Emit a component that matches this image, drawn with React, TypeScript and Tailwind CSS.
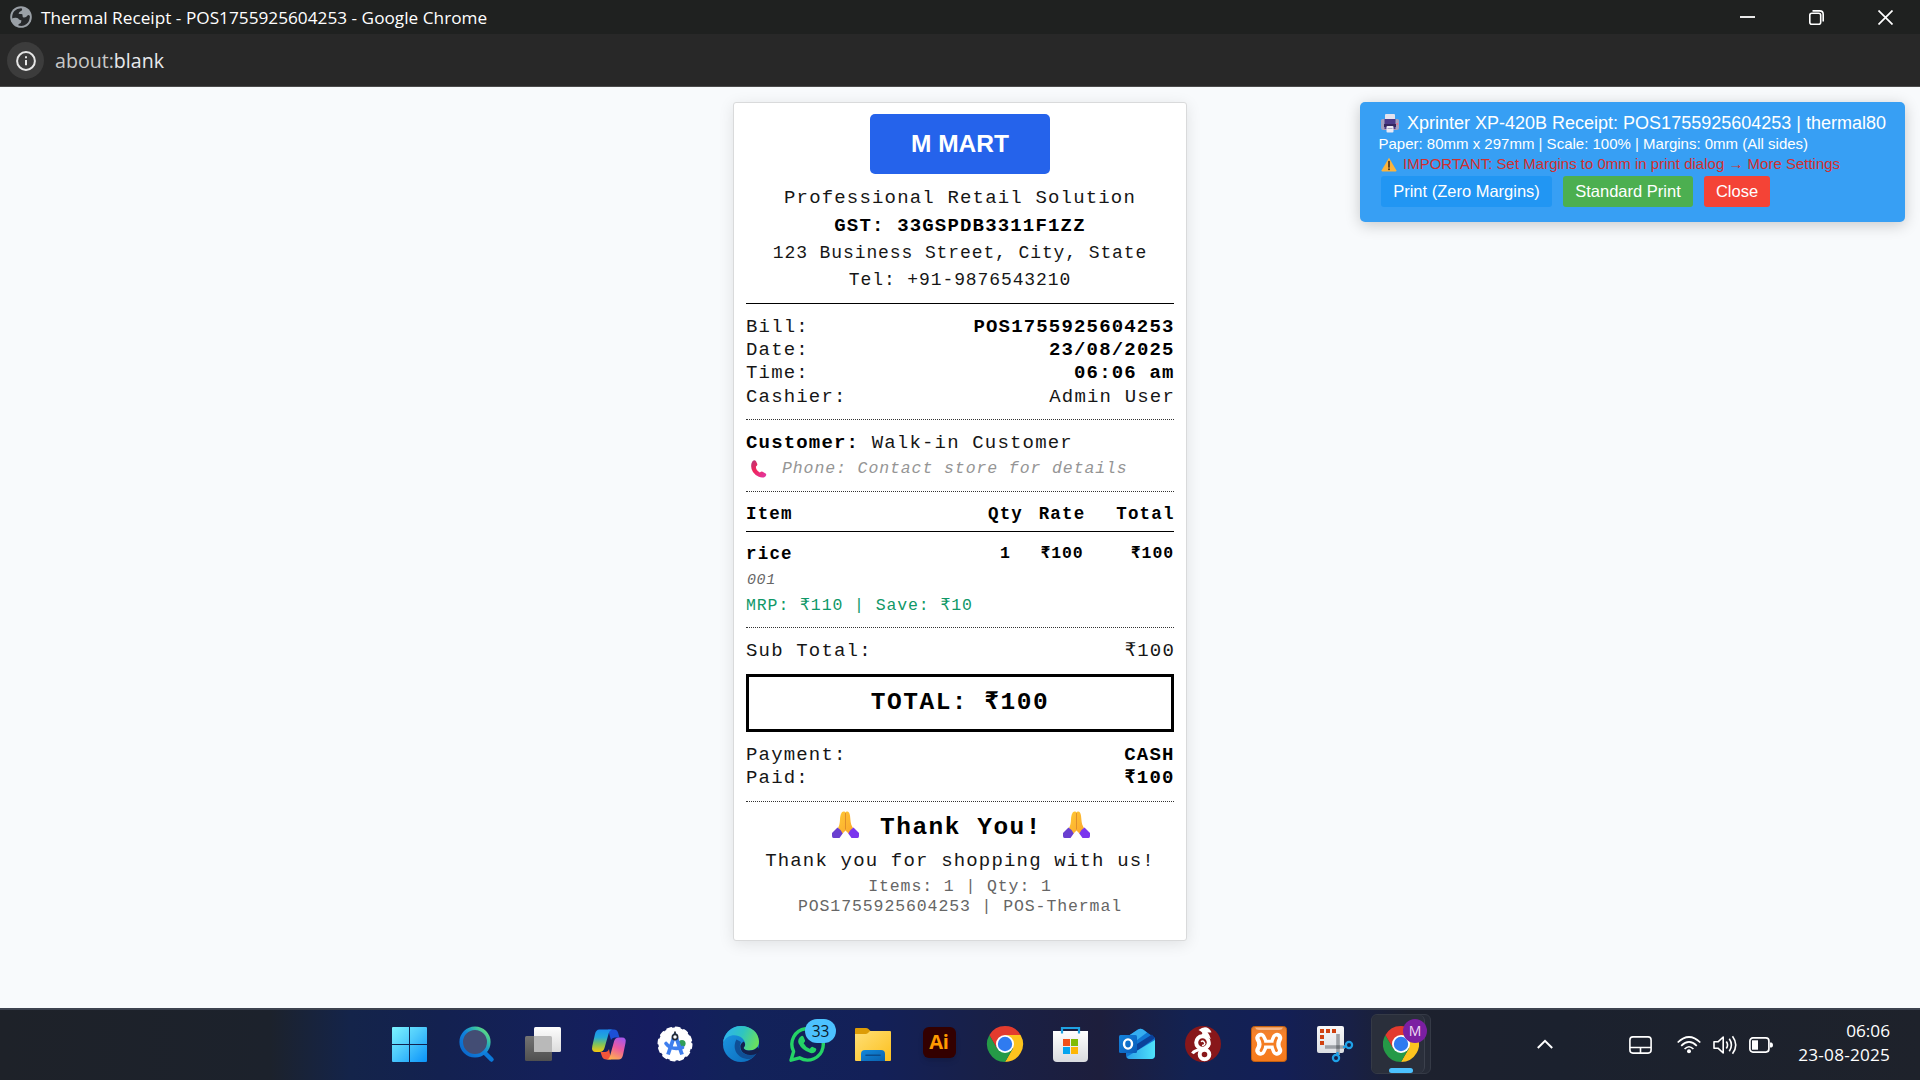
import React from "react";

/* ---------- small illustrations ---------- */

function PrayIcon() {
  return (
    <svg width="27" height="27" viewBox="0 0 27 27" className="block shrink-0">
      <defs>
        <linearGradient id="hand" x1="0" y1="0" x2="1" y2="1">
          <stop offset="0" stopColor="#ffc936" />
          <stop offset="1" stopColor="#fba62c" />
        </linearGradient>
      </defs>
      <path d="M6 17C7.500 14.500 7.800 11.500 8 8.500C8.300 3.500 9.500 .500 11.600 .500c1 0 1.600 .400 1.900 1C13.900 .700 14.500 .400 15.300 .400c2.300 0 2.900 4 3.100 8.100c.300 3.500 .900 6 2.600 8.500L17 23L13.500 19.500L10 23Z" fill="url(#hand)" />
      <path d="M13.500 2v16.500" stroke="#e08f2a" strokeWidth="1" />
      <path d="M0 22L5.500 16.500Q9 18.500 10.700 22.500L7.500 27H1.500Q0 27 0 25Z" fill="#6a3fd0" />
      <path d="M27 22L21.500 16.500Q18 18.500 16.300 22.500L19.500 27H25.500Q27 27 27 25Z" fill="#7a35ee" />
    </svg>
  );
}

function PhoneIcon() {
  return (
    <svg width="16" height="18" viewBox="0 0 16 18" className="block shrink-0">
      <defs>
        <linearGradient id="phone" x1="0" y1="0" x2="1" y2="1">
          <stop offset="0" stopColor="#b03a7c" />
          <stop offset=".4" stopColor="#f0245a" />
          <stop offset="1" stopColor="#e03aa8" />
        </linearGradient>
      </defs>
      <path d="M1.500 1.200Q3.500-.800 5 1.200L6.200 3.800Q6.800 5.200 5 6.400Q4.400 9.500 8.800 12.600Q10.500 11.200 11.600 11.800L14.600 13.600Q16 14.800 14.400 16.400Q11.800 18.600 7.800 16.800Q-1.500 11.800 .500 3.200Z" fill="url(#phone)" />
    </svg>
  );
}

function PrinterIcon() {
  return (
    <svg width="18" height="19" viewBox="0 0 18 19" className="block shrink-0">
      <rect x="4" y="0" width="10" height="7" rx="1" fill="#e4e2ee" />
      <path d="M1.500 5h15a1.500 1.500 0 0 1 1.500 1.500V14a2 2 0 0 1-2 2H2a2 2 0 0 1-2-2V6.500A1.500 1.500 0 0 1 1.500 5Z" fill="#a59fbd" />
      <path d="M3.500 5h11v10h-11z" fill="#4b3a8a" />
      <path d="M3 10h12v3H3z" fill="#34265f" />
      <rect x="5.500" y="12" width="7" height="6.500" rx="1" fill="#eceaf4" />
      <path d="M6.500 14.500h5" stroke="#aaa5bd" />
      <circle cx="16.200" cy="10" r=".9" fill="#f26b8a" />
    </svg>
  );
}

function WarningIcon() {
  return (
    <svg width="16" height="15" viewBox="0 0 16 15" className="block shrink-0">
      <path d="M8 .800L15.300 13.200Q15.600 14.500 14.500 14.500H1.500Q.400 14.500 .700 13.200Z" fill="#fcb43c" />
      <path d="M8 4.500v5.500" stroke="#4a3320" strokeWidth="1.700" strokeLinecap="round" />
      <circle cx="8" cy="12.300" r="1" fill="#4a3320" />
    </svg>
  );
}

function ChromeLogo() {
  return (
    <>
      <path d="M18 9H33.590A18 18 0 0 1 18 36L25.800 22.500Z" fill="#fcc31e" />
      <path d="M25.800 22.500L18 36A18 18 0 0 1 2.410 9L10.200 22.500Z" fill="#259a47" />
      <path d="M10.200 22.500L2.410 9A18 18 0 0 1 33.590 9H18Z" fill="#e33b2e" />
      <circle cx="18" cy="18" r="9" fill="#fff" />
      <circle cx="18" cy="18" r="7.200" fill="#2f7bf0" />
    </>
  );
}

/* ---------- taskbar icons, each on a 36 x 36 grid ---------- */

function WindowsIcon() {
  return (
    <g transform="translate(-2 0)">
      <defs>
        <linearGradient id="win" gradientUnits="userSpaceOnUse" x1="1" y1="1" x2="36" y2="36">
          <stop offset="0" stopColor="#7cf3ff" />
          <stop offset=".45" stopColor="#4fcbfb" />
          <stop offset="1" stopColor="#0a93fa" />
        </linearGradient>
      </defs>
      <path d="M2 1H18V18H1V2a1 1 0 0 1 1-1ZM19 1H35a1 1 0 0 1 1 1V18H19ZM1 19H18V36H2a1 1 0 0 1-1-1ZM19 19H36V35a1 1 0 0 1-1 1H19Z" fill="url(#win)" />
    </g>
  );
}

function SearchIcon() {
  return (
    <g transform="translate(-1 0)">
      <defs>
        <linearGradient id="srch" x1="0" y1="1" x2="1" y2="0">
          <stop offset="0" stopColor="#0a63c8" />
          <stop offset=".5" stopColor="#1183dd" />
          <stop offset=".75" stopColor="#35bfa8" />
          <stop offset="1" stopColor="#7be868" />
        </linearGradient>
      </defs>
      <path d="M26 26L33.500 33.500" stroke="#0b78d8" strokeWidth="4.500" strokeLinecap="round" />
      <circle cx="17" cy="16" r="13.800" fill="#434d74" stroke="url(#srch)" strokeWidth="3.600" />
    </g>
  );
}

function TaskViewIcon() {
  return (
    <g transform="translate(-2 0)">
      <defs>
        <linearGradient id="tvw" x1="0" y1="0" x2="0" y2="1">
          <stop offset="0" stopColor="#fdfdfd" />
          <stop offset="1" stopColor="#dcdcdc" />
        </linearGradient>
        <linearGradient id="tvg" x1="0" y1="0" x2="0" y2="1">
          <stop offset="0" stopColor="#737373" />
          <stop offset="1" stopColor="#505050" />
        </linearGradient>
      </defs>
      <rect x="2" y="10" width="27" height="25" rx="1.500" fill="url(#tvg)" />
      <rect x="11" y="1" width="27" height="25" rx="1.500" fill="url(#tvw)" />
      <path d="M11 10H27.500a1.500 1.500 0 0 1 1.500 1.500V26H12.500A1.500 1.500 0 0 1 11 24.500Z" fill="#b9b9b9" />
    </g>
  );
}

function CopilotIcon() {
  return (
    <g>
      <defs>
        <linearGradient id="cpa" x1="0" y1="0" x2="0" y2="1">
          <stop offset="0" stopColor="#1b8df0" />
          <stop offset=".35" stopColor="#23a9d8" />
          <stop offset=".65" stopColor="#7fc25c" />
          <stop offset="1" stopColor="#f5c80e" />
        </linearGradient>
        <linearGradient id="cpb" x1=".7" y1="0" x2=".3" y2="1">
          <stop offset="0" stopColor="#a957e8" />
          <stop offset=".45" stopColor="#ec5aa0" />
          <stop offset="1" stopColor="#ffb14e" />
        </linearGradient>
      </defs>
      <path d="M17 3.500H23Q26 3.500 27 6.500L28.500 11.500H24Q21 11.500 20 14Z" fill="#1c50d8" />
      <path d="M9.500 26H14Q17 26 18 23L20 33.500H15.500Q12 33.500 11 30.500Z" fill="#f2563a" />
      <path d="M8.500 3.500H22Q18.800 3.500 17.800 7L13.500 22Q12.300 26 8.500 26H5Q0 26 1.300 20L4 8Q5 3.500 8.500 3.500Z" fill="url(#cpa)" />
      <path d="M27.500 33.500H15Q18 33.500 19 30L23 15.500Q24 11.500 28 11.500H31Q35.800 11.500 34.500 17L32 29Q31 33.500 27.500 33.500Z" fill="url(#cpb)" />
    </g>
  );
}

function AndroidStudioIcon() {
  return (
    <g>
      <circle cx="18" cy="18" r="16.500" fill="#fff" />
      <circle cx="18" cy="18" r="16.600" fill="none" stroke="#fff" strokeWidth="1.800" strokeDasharray="4.350 4.350" strokeLinecap="round" />
      <circle cx="25" cy="17.500" r="3.600" fill="#2f9e58" />
      <path d="M18 8L11 28.500" stroke="#3f7fee" strokeWidth="3.800" />
      <path d="M18 8L25 28.500" stroke="#3f7fee" strokeWidth="3.800" />
      <path d="M9 17.500Q14 24.500 25.500 21.500" stroke="#3f7fee" strokeWidth="3.600" fill="none" strokeLinecap="round" />
      <circle cx="18" cy="11" r="2.600" fill="#fff" stroke="#222b38" strokeWidth="1.700" />
      <path d="M18 5.500v2.500" stroke="#222b38" strokeWidth="1.800" />
    </g>
  );
}

function EdgeIcon() {
  return (
    <g>
      <defs>
        <linearGradient id="ed1" x1="0" y1=".3" x2="1" y2=".6">
          <stop offset="0" stopColor="#2fb2ee" />
          <stop offset=".5" stopColor="#2fc5c0" />
          <stop offset="1" stopColor="#6be05a" />
        </linearGradient>
        <linearGradient id="ed2" x1="0" y1="0" x2="1" y2="1">
          <stop offset="0" stopColor="#1d9be6" />
          <stop offset="1" stopColor="#0a67b8" />
        </linearGradient>
      </defs>
      <circle cx="18" cy="18" r="18" fill="url(#ed2)" />
      <path d="M13.500 13.500C8.500 22 14 33.500 27 33Q31 31.500 34 27Q31 29 27 29C19 29 14.500 22.500 18 16Z" fill="#0f4f96" />
      <path d="M0 17C1 7 9 0 18 0C28.500 0 36 7 36 15.500C36 21 32 24.500 26.500 24.500C22.500 24.500 20.300 23 20.800 21.500C23 19 22.500 15 19 12C13 7 3 9 0 17Z" fill="url(#ed1)" />
      <path d="M20.800 21.500C20.300 23 22.500 24.500 26.500 24.500Q31.500 24.500 34.500 21L37 24L34 27.500Q30.500 29.200 27 29C20 28.500 16.500 24 17.500 19Q18.500 16.500 20.700 15.500Q23.500 18.500 20.800 21.500Z" fill="#14204f" />
    </g>
  );
}

function WhatsAppIcon() {
  return (
    <g>
      <path d="M2 34.200L4.600 25.500A15.700 15.700 0 1 1 10.500 31.800Z" fill="none" stroke="#25d366" strokeWidth="3.400" strokeLinejoin="round" />
      <path d="M12 10.200q1.500-.9 2.500 .6l1.600 3.600q.2 1-1.500 2.800q2.200 4 6.200 5.500q1.700-2.200 2.500-2l3.700 1.900q.8 .7-.3 2.700q-1.900 2.400-5.200 1.700q-8.500-2.500-12-9.700q-1.300-4 2.500-7.100Z" fill="#25d366" />
    </g>
  );
}

function FolderIcon() {
  return (
    <g>
      <defs>
        <linearGradient id="fol" x1="0" y1="0" x2="1" y2="1">
          <stop offset="0" stopColor="#ffdf76" />
          <stop offset="1" stopColor="#fcc01e" />
        </linearGradient>
        <linearGradient id="fob" x1="0" y1="0" x2="1" y2="1">
          <stop offset="0" stopColor="#1188dc" />
          <stop offset="1" stopColor="#0a62ae" />
        </linearGradient>
      </defs>
      <path d="M1 2H11Q12.500 2 13.500 3L16 5.500L12 9H0V3Q0 2 1 2Z" fill="#dd9c06" />
      <path d="M0 8H10.500Q12 8 13 7L15 5H35Q36 5 36 6V34Q36 35 35 35H1Q0 35 0 34Z" fill="url(#fol)" />
      <path d="M6 35V28Q6 24 10 24H26Q30 24 30 28V35Z" fill="url(#fob)" />
      <path d="M11 29.300H25" stroke="#0a4c8c" strokeWidth="1.600" strokeLinecap="round" />
    </g>
  );
}

function StoreIcon() {
  return (
    <g>
      <defs>
        <linearGradient id="sto" x1="0" y1="0" x2="0" y2="1">
          <stop offset="0" stopColor="#fff" />
          <stop offset="1" stopColor="#d9dbdf" />
        </linearGradient>
      </defs>
      <path d="M0 5H35V32Q35 36 31 36H4Q0 36 0 32Z" fill="url(#sto)" />
      <path d="M9 7.500V2H26V7.500" fill="none" stroke="#1fa2e2" strokeWidth="2.200" />
      <path d="M10 13H17V20H10Z" fill="#f1511b" />
      <path d="M18 13H25V20H18Z" fill="#80bb03" />
      <path d="M10 21H17V28H10Z" fill="#05a4ef" />
      <path d="M18 21H25V28H18Z" fill="#fdb605" />
    </g>
  );
}

function OutlookIcon() {
  return (
    <g>
      <defs>
        <linearGradient id="out" x1="0" y1="0" x2="1" y2="1">
          <stop offset="0" stopColor="#1483dc" />
          <stop offset="1" stopColor="#0a5bb8" />
        </linearGradient>
        <linearGradient id="oul" x1="0" y1="0" x2="1" y2="0">
          <stop offset="0" stopColor="#2a9fe8" />
          <stop offset="1" stopColor="#4fe3fb" />
        </linearGradient>
      </defs>
      <path d="M7 15V11.500L19 3.500Q21.500 2 24 3.500L36 12V29Q36 33 32 33H11Q7 33 7 29Z" fill="#1177d4" />
      <path d="M7 11.500L19 3.500Q21.500 2 24 3.500L28 6.500L14 17H7Z" fill="#35aef0" />
      <path d="M18 18L33 8.500L36 12L18 25Z" fill="#0b419a" />
      <path d="M36 14V29Q36 33 32 33H11Q8.500 33 7.500 31Z" fill="url(#oul)" />
      <rect x="0" y="9" width="18" height="18" rx="1.500" fill="url(#out)" />
      <ellipse cx="9" cy="18" rx="4" ry="4.600" fill="none" stroke="#fff" strokeWidth="2.400" />
    </g>
  );
}

function WireGuardIcon() {
  return (
    <g>
      <circle cx="18" cy="18" r="18" fill="#88171a" />
      <path d="M13.500 4Q17 1.500 20 1.200Q24 1.200 26.500 6.200Q25 6.800 22.500 6.200Q25 9 25.800 13Q22.500 10 19 10.500Q15.500 11 17 8Q18.500 6.500 13.500 4Z" fill="#fff" />
      <circle cx="17.500" cy="16.500" r="6.300" fill="none" stroke="#fff" strokeWidth="4" />
      <circle cx="19.500" cy="28.500" r="4.800" fill="none" stroke="#fff" strokeWidth="4" />
      <path d="M7.500 27.500Q9.500 23.800 17 23.500Q22 22.500 24.500 17" fill="none" stroke="#fff" strokeWidth="3.200" />
      <path d="M16 15.800Q18.500 13.500 19.800 17.500Q19.500 19.500 17 19.500" fill="none" stroke="#fff" strokeWidth="1.400" />
    </g>
  );
}

function XamppIcon() {
  return (
    <g>
      <defs>
        <linearGradient id="xam" x1="0" y1="0" x2="0" y2="1">
          <stop offset="0" stopColor="#dd7c31" />
          <stop offset=".2" stopColor="#f6812a" />
          <stop offset="1" stopColor="#f57a1c" />
        </linearGradient>
      </defs>
      <rect x=".5" y=".5" width="35" height="35" rx="3" fill="url(#xam)" stroke="#c4600f" />
      <path d="M4 1.500H32Q31 4 28 4H8Q5 4 4 1.500Z" fill="#f6b583" />
      <g fill="none" strokeLinecap="round" strokeLinejoin="round">
        <path d="M9.500 12Q13.500 18 9.500 24.500M26 12Q22.500 18 26 24.500" stroke="#fff" strokeWidth="10.500" />
        <path d="M12 18.200H24" stroke="#fff" strokeWidth="9" />
        <path d="M10 12Q14 18 10 24.500M25.500 12Q22 18 25.500 24.500M12 18.200H24" stroke="#f47d22" strokeWidth="2.800" />
      </g>
    </g>
  );
}

function SnipIcon() {
  return (
    <g>
      <defs>
        <linearGradient id="snp" x1="0" y1="0" x2="0" y2="1">
          <stop offset="0" stopColor="#f7f8f9" />
          <stop offset="1" stopColor="#dcdfe3" />
        </linearGradient>
      </defs>
      <rect x="0" y="0" width="27" height="27" rx="2" fill="url(#snp)" />
      <path d="M3 3h4v4h-4zM9 3h4v4h-4zM15 3h4v4h-4zM3 9h4v4h-4zM3 15h4v4h-4z" fill="#d0410f" />
      <path d="M21 8V29M8 21H28" stroke="#9da1a6" strokeWidth="3.600" />
      <path d="M19.200 19.200h3.600v3.600h-3.600z" fill="#6f7479" />
      <circle cx="19" cy="32" r="3.100" fill="none" stroke="#1ea1e8" strokeWidth="2.200" />
      <circle cx="32" cy="19" r="3.100" fill="none" stroke="#1ea1e8" strokeWidth="2.200" />
      <path d="M20.500 26v3M26 21.300l3.500-.8" stroke="#1ea1e8" strokeWidth="2.200" />
    </g>
  );
}

function IconCell({ children }: { children: React.ReactNode }) {
  return (
    <div className="flex w-[66px] items-center justify-center">
      <svg width="36" height="36" viewBox="0 0 36 36" className="block overflow-visible">
        {children}
      </svg>
    </div>
  );
}

/* ---------- window chrome ---------- */

function TitleBar() {
  return (
    <header className="flex h-[34px] items-center bg-[#1f2120] text-white">
      <svg width="22" height="22" viewBox="0 0 22 22" className="mt-[-1px] ml-[10px] block">
        <circle cx="11" cy="11" r="10.800" fill="#9aa0a6" />
        <path d="M11.500 2.200Q7 2 4.400 5Q1.800 8 2.200 12.500Q3.500 11.500 6 11.700Q8.500 12 9 13.500L11.500 14.500Q11.500 17 9 18Q7.800 18.500 8.500 19.500Q13 20.800 16.500 18Q20 15 19.900 10Q18.500 8.500 17.500 9.500Q16 12 13.500 11.500Q12.500 11.400 12.500 9.500Q13 8 11.500 8Q9.500 8.200 8.500 7.500Q9 5.500 11 5Q13 4 11.500 2.200Z" fill="#26282a" />
      </svg>
      <div className="ml-[9px] h-[34px] text-[17.2px] leading-[35px] tracking-[0.020px] whitespace-pre">
        Thermal Receipt - POS1755925604253 - Google Chrome
      </div>
      <div className="ml-auto flex items-center">
        <svg width="15" height="15" viewBox="0 0 15 15" className="mr-[54px] block">
          <path d="M0 7H15" stroke="#fff" strokeWidth="1.800" />
        </svg>
        <svg width="15" height="15" viewBox="0 0 15 15" className="mr-[54px] block" fill="none" stroke="#fff" strokeWidth="1.600">
          <rect x=".8" y="3.300" width="10.900" height="10.900" rx="2" />
          <path d="M3.500 .900H10.700Q14.200 .900 14.200 4.400V11.500" />
        </svg>
        <svg width="15" height="15" viewBox="0 0 15 15" className="mr-[27px] block">
          <path d="M.500 .500L14.500 14.500M14.500 .500L.500 14.500" stroke="#fff" strokeWidth="1.700" />
        </svg>
      </div>
    </header>
  );
}

function AddressBar() {
  return (
    <div className="flex h-[53px] items-center border-b border-[#4b4b4b] bg-[#282828]">
      <div className="ml-[7px] flex h-[37px] w-[37px] items-center justify-center rounded-full bg-[#3c3c3c] pl-px pt-px">
        <svg width="20" height="20" viewBox="0 0 20 20" className="block" fill="none" stroke="#e6e6e6">
          <circle cx="10" cy="10" r="8.900" strokeWidth="2" />
          <path d="M10 9v5.200" strokeWidth="2" />
          <path d="M10 5.300v2" strokeWidth="2" />
        </svg>
      </div>
      <div className="mt-[2px] ml-[11px] text-[19.6px] leading-[26px] text-[#c7c7c7]">
        about:<span className="text-[#e8eaed]">blank</span>
      </div>
    </div>
  );
}

/* ---------- print panel ---------- */

function PrintPanel() {
  return (
    <aside className="absolute top-[15px] right-[15px] h-[120px] w-[545px] rounded-[5px] bg-[#379ff4] font-['Liberation_Sans',Arial,sans-serif] text-white shadow-[0_3px_15px_rgba(0,0,0,0.2)]">
      <div className="flex h-[21px] pt-[12px] pl-[21px]">
        <PrinterIcon />
        <span className="ml-[8px] text-[18px] leading-[18px] whitespace-pre">Xprinter XP-420B Receipt: POS1755925604253 | thermal80</span>
      </div>
      <div className="mt-[12px] ml-[18.500px] text-[15px] leading-[18px] whitespace-pre">
        Paper: 80mm x 297mm | Scale: 100% | Margins: 0mm (All sides)
      </div>
      <div className="mt-[2px] ml-[21px] flex h-[18px] items-center text-[15px] leading-[18px] text-[#d32f2f]">
        <WarningIcon />
        <span className="ml-[6px] whitespace-pre">IMPORTANT: Set Margins to 0mm in print dialog → More Settings</span>
      </div>
      <div className="mt-[3px] ml-[21px] flex text-[16.500px] leading-[31px]">
        <button className="h-[31px] w-[171px] rounded-[3px] bg-[#2196f3] whitespace-nowrap">Print (Zero Margins)</button>
        <button className="ml-[11px] h-[31px] w-[130px] rounded-[3px] bg-[#4caf50] whitespace-nowrap">Standard Print</button>
        <button className="ml-[11px] h-[31px] w-[66px] rounded-[3px] bg-[#f44336]">Close</button>
      </div>
    </aside>
  );
}

/* ---------- receipt ---------- */

function Row({ label, value, bold = true }: { label: string; value: string; bold?: boolean }) {
  return (
    <div className="flex h-[23.330px] justify-between leading-[23.330px]">
      <span>{label}</span>
      <span className={bold ? "-mr-[0.600px] font-bold text-black" : "-mr-[1px]"}>{value}</span>
    </div>
  );
}

function Receipt() {
  return (
    <main className="mx-auto h-[839px] w-[454px] rounded-[3px] border border-[#d9dadb] bg-white px-[12px] pt-[11px] font-['Liberation_Mono','DejaVu_Sans_Mono',monospace] text-[19px] tracking-[1.170px] text-[#161616] shadow-[0_3px_15px_rgba(0,0,0,0.1)]">
      <section className="h-[190px] border-b border-black text-center leading-[27px]">
        <div className="mx-auto mb-[11px] flex h-[60px] w-[180px] items-center justify-center rounded-[5px] bg-[#2563eb] pb-[2px] font-['Liberation_Sans',Arial,sans-serif] text-[24.500px] font-bold tracking-normal text-white">
          M MART
        </div>
        <div>Professional Retail Solution</div>
        <div className="mt-px font-bold text-black">GST: 33GSPDB3311F1ZZ</div>
        <div className="text-[18px] tracking-[0.900px]">123 Business Street, City, State</div>
        <div className="text-[18px] tracking-[0.900px]">Tel: +91-9876543210</div>
      </section>

      <section className="h-[116px] border-b border-dotted border-[#333] pt-[11.600px]">
        <Row label="Bill:" value="POS1755925604253" />
        <Row label="Date:" value="23/08/2025" />
        <Row label="Time:" value="06:06 am" />
        <Row label="Cashier:" value="Admin User" bold={false} />
      </section>

      <section className="h-[72px] border-b border-dotted border-[#333] pt-[11px]">
        <div className="leading-[24px]">
          <span className="font-bold text-black">Customer:</span> Walk-in Customer
        </div>
        <div className="mt-[2px] flex items-center pl-[5px] text-[16.500px] leading-[24px] tracking-[0.900px] text-[#959595] italic">
          <PhoneIcon />
          <span className="ml-[15px]">Phone: Contact store for details</span>
        </div>
      </section>

      <section className="grid h-[40px] grid-cols-[233px_53px_60px_82px] border-b border-black pt-[10px] text-[17.500px] leading-[24px] font-bold text-black">
        <span>Item</span>
        <span className="text-center">Qty</span>
        <span className="text-center">Rate</span>
        <span className="-mr-[0.600px] text-right">Total</span>
      </section>

      <section className="h-[96px] border-b border-dotted border-[#333] pt-[10px]">
        <div className="grid grid-cols-[233px_53px_60px_82px] text-[16.500px] leading-[24px] font-bold tracking-[0.900px] text-black">
          <span className="text-[17.500px] tracking-[1.200px]">rice</span>
          <span className="text-center">1</span>
          <span className="text-center">₹100</span>
          <span className="text-right">₹100</span>
        </div>
        <div className="mt-[5px] pl-px text-[15px] leading-[20px] tracking-[0.600px] text-[#666] italic">001</div>
        <div className="mt-[5px] text-[16.500px] leading-[20px] tracking-[0.900px] text-[#109868]">MRP: ₹110 | Save: ₹10</div>
      </section>

      <section className="h-[46px] pt-[11.600px]">
        <Row label="Sub Total:" value="₹100" bold={false} />
      </section>

      <section className="h-[58px] border-[3px] border-black pt-[11px] text-center text-[24.500px] leading-[30px] font-bold tracking-[1.500px] text-black">
        TOTAL: ₹100
      </section>

      <section className="h-[70px] border-b border-dotted border-[#333] pt-[11.600px]">
        <Row label="Payment:" value="CASH" />
        <Row label="Paid:" value="₹100" />
      </section>

      <section className="pt-[10px] text-center">
        <div className="flex h-[31px] justify-center gap-[21px] pl-[2px] text-[24.500px] leading-[31px] font-bold tracking-[1.500px] text-black">
          <div className="-mt-px"><PrayIcon /></div>
          <span className="-mr-[1px]">Thank You!</span>
          <div className="-mt-px ml-px"><PrayIcon /></div>
        </div>
        <div className="mt-[6px] leading-[24px]">Thank you for shopping with us!</div>
        <div className="mt-[4px] text-[16.500px] leading-[20px] tracking-[0.900px] text-[#666]">
          <div>Items: 1 | Qty: 1</div>
          <div>POS1755925604253 | POS-Thermal</div>
        </div>
      </section>
    </main>
  );
}

/* ---------- taskbar ---------- */

function Tray() {
  return (
    <div className="mr-[30px] ml-auto flex items-center">
      <svg width="16" height="10" viewBox="0 0 16 10" className="mt-[-2px] mr-[76px] block" fill="none" stroke="#fff" strokeWidth="2">
        <path d="M.800 9L8 1.800L15.200 9" />
      </svg>
      <svg width="23" height="18" viewBox="0 0 23 18" className="mr-[25px] block" fill="none" stroke="#fff" strokeWidth="1.600">
        <rect x=".9" y=".9" width="21.200" height="16.200" rx="3" />
        <path d="M1 11.500H22M11.500 11.500V17" />
      </svg>
      <svg width="24" height="18" viewBox="0 0 24 18" className="mr-[12px] block" fill="none" stroke="#fff" strokeWidth="1.700">
        <path d="M.700 6.500Q12-4.500 23.300 6.500" />
        <path d="M4.200 9.800Q12 2 19.800 9.800" />
        <path d="M7.600 13Q12 8.500 16.400 13" />
        <circle cx="12" cy="15.200" r="2" fill="#fff" stroke="none" />
      </svg>
      <svg width="25" height="20" viewBox="0 0 25 20" className="mr-[11px] block" fill="none" stroke="#fff" strokeWidth="1.600" strokeLinejoin="round">
        <path d="M1 6.800H5L10.200 2V18L5 13.200H1Z" />
        <path d="M13.300 6.500Q15.800 10 13.300 13.500M16.300 3.800Q20.500 10 16.300 16.200M19.500 1.200Q26 10 19.500 18.800" />
      </svg>
      <svg width="24" height="16" viewBox="0 0 24 16" className="mr-[24px] block">
        <rect x=".9" y=".9" width="19" height="14.200" rx="3" fill="none" stroke="#fff" strokeWidth="1.700" />
        <rect x="3" y="3.300" width="6" height="9.400" fill="#fff" />
        <path d="M21 5.500H22.500Q24 6 24 8T22.500 10.500H21Z" fill="#fff" />
      </svg>
      <div className="w-[93px] pb-[4px] text-right text-[17.200px] leading-[24px] text-white">
        <div>06:06</div>
        <div className="tracking-[0.200px] whitespace-nowrap">23-08-2025</div>
      </div>
    </div>
  );
}

function Taskbar() {
  return (
    <footer className="flex h-[72px] border-t-2 border-[#3d434f] bg-[linear-gradient(90deg,#1e2229_0px,#1c222c_270px,#14244a_350px,#132150_440px,#14205a_560px,#151c60_650px,#12225a_730px,#132058_880px,#182048_980px,#1d1e3c_1100px,#132252_1190px,#131f56_1280px,#182046_1350px,#1d212e_1410px,#1b212e_1560px,#1e222b_1920px)] bg-[length:1920px_100%] pl-[378px]">
      <div className="flex h-[68px]">
        <IconCell><WindowsIcon /></IconCell>
        <IconCell><SearchIcon /></IconCell>
        <IconCell><TaskViewIcon /></IconCell>
        <IconCell><CopilotIcon /></IconCell>
        <IconCell><AndroidStudioIcon /></IconCell>
        <IconCell><EdgeIcon /></IconCell>
        <div className="relative flex w-[66px] items-center justify-center">
          <svg width="36" height="36" viewBox="0 0 36 36" className="block overflow-visible"><WhatsAppIcon /></svg>
          <div className="absolute top-[9px] left-[31px] h-[24px] w-[31px] rounded-full bg-[#4cc2ff] text-center text-[15.500px] leading-[24px] text-[#0b1a2c]">33</div>
        </div>
        <IconCell><FolderIcon /></IconCell>
        <div className="flex w-[66px] items-start justify-center pt-[17px]">
          <div className="h-[31px] w-[33px] rounded-[6px] bg-[#330000] text-center text-[20px] leading-[29px] font-bold tracking-[-0.300px] text-[#ff9a00] shadow-md">Ai</div>
        </div>
        <IconCell><ChromeLogo /></IconCell>
        <IconCell><StoreIcon /></IconCell>
        <IconCell><OutlookIcon /></IconCell>
        <IconCell><WireGuardIcon /></IconCell>
        <IconCell><XamppIcon /></IconCell>
        <IconCell><SnipIcon /></IconCell>
        <div className="relative mt-[4px] ml-[3px] flex h-[60px] w-[60px] rounded-[6px] border border-[#353a46] bg-[#262b37]">
          <div className="flex h-full w-[53px] items-start rounded-[6px] border-r border-[#3c414d] bg-[#2a2f3b] pt-[11px] pl-[11px]">
            <svg width="36" height="36" viewBox="0 0 36 36" className="block"><ChromeLogo /></svg>
          </div>
          <div className="absolute top-[4px] left-[31px] flex h-[24px] w-[24px] items-center justify-center rounded-full bg-[#7b1fa2] text-[14px] leading-none font-medium text-[#f0dcf5]">M</div>
          <div className="absolute top-[53px] left-[17px] h-[5px] w-[24px] rounded-full bg-[#4cc2ff]" />
        </div>
      </div>
      <Tray />
    </footer>
  );
}

export default function App() {
  return (
    <div className="flex h-[1080px] w-[1920px] flex-col overflow-hidden bg-[#f8fafc] font-['Open_Sans','Noto_Sans',sans-serif]">
      <TitleBar />
      <AddressBar />
      <div className="relative h-[921px] pt-[15px]">
        <Receipt />
        <PrintPanel />
      </div>
      <Taskbar />
    </div>
  );
}
